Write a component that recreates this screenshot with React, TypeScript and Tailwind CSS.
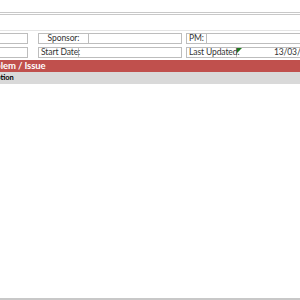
export default function App() {
  const font = { fontFamily: 'Lato, "Open Sans", sans-serif' };
  return (
    <div className="w-[300px] h-[300px] bg-white overflow-hidden flex flex-col" style={font}>
      {/* title area border */}
      <div className="h-[12px]" />
      <div className="h-[3px] border-y border-[#c8c8c8]" />
      <div className="h-[16px] border-b border-[#e4e4e4]" />

      {/* info rows */}
      <div className="flex flex-col gap-[3px] pt-[2px] text-[8.5px] tracking-[-0.1px] text-[#333] leading-none whitespace-nowrap">
        <div className="flex h-[11px]">
          <div className="w-[28px] border border-[#bdbdbd] border-l-0" />
          <div className="w-[10px]" />
          <div className="w-[51px] border border-[#bdbdbd] flex items-center justify-center">Sponsor:</div>
          <div className="w-[93px] border border-l-0 border-[#bdbdbd]" />
          <div className="w-[4px]" />
          <div className="w-[21px] border border-[#bdbdbd] flex items-center pl-[2px]">PM:</div>
          <div className="flex-1 border border-l-0 border-r-0 border-[#bdbdbd]" />
        </div>
        <div className="flex h-[11px]">
          <div className="w-[28px] border border-[#bdbdbd] border-l-0" />
          <div className="w-[10px]" />
          <div className="w-[41px] border border-[#bdbdbd] flex items-center pl-[2px]">Start Date:</div>
          <div className="w-[103px] border border-l-0 border-[#bdbdbd]" />
          <div className="w-[4px]" />
          <div className="w-[51px] border border-[#bdbdbd] flex items-center pl-[2px]">Last Updated:</div>
          <div className="relative flex-1 border border-l-0 border-r-0 border-[#bdbdbd] flex items-center justify-end overflow-hidden">
            <span className="absolute left-0 top-0 w-0 h-0 border-t-[5px] border-r-[5px] border-t-[#1e7a1e] border-r-transparent" />
            <span className="-mr-[20px]">13/03/2014</span>
          </div>
        </div>
      </div>

      {/* section header */}
      <div className="mt-[2px] h-[12px] bg-[#c0504d] text-white font-bold text-[9.5px] tracking-[-0.1px] leading-[12px] overflow-hidden whitespace-nowrap">
        <span className="-ml-[19px] inline-block">Problem / Issue</span>
      </div>
      <div className="h-[12px] bg-[#d9d9d9] text-black font-bold text-[7.5px] leading-[12px] overflow-hidden whitespace-nowrap">
        <span className="-ml-[25px] inline-block">Description</span>
      </div>

      <div className="flex-1" />
      <div className="h-[2px] bg-[#c8c8c8]" />
    </div>
  );
}
